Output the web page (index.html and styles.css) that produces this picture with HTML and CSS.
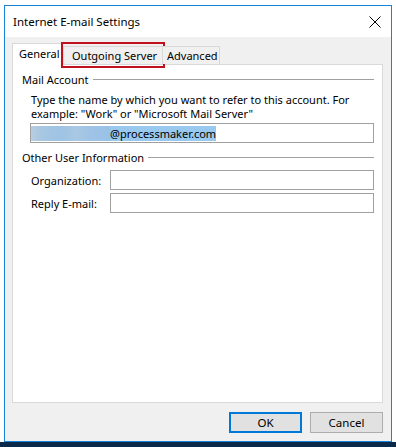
FILE: index.html
```html
<!DOCTYPE html>
<html lang="en">
<head>
    <meta charset="UTF-8">
    <title>Internet E-mail Settings</title>
    <link rel="stylesheet" href="styles.css">
</head>
<body>
    <div class="desktop">
        <div class="window">
            <div class="titlebar">
                <span class="title">Internet E-mail Settings</span>
                <span class="close">
                    <svg width="12" height="12" viewBox="0 0 12 12"><path d="M0.5 0.5 L11.5 11.5 M11.5 0.5 L0.5 11.5" stroke="#000" stroke-width="1"/></svg>
                </span>
            </div>
            <div class="content">
                <div class="tabs">
                    <div class="tab active">General</div>
                    <div class="tab marked">Outgoing Server</div>
                    <div class="tab last">Advanced</div>
                </div>
                <div class="panel">
                    <div class="group-title"><span>Mail Account</span></div>
                    <p class="hint">Type the name by which you want to refer to this account. For<br>example: "Work" or "Microsoft Mail Server"</p>
                    <div class="field wide"><span class="blur"></span><span class="sel">@processmaker.com</span></div>

                    <div class="group-title"><span>Other User Information</span></div>
                    <div class="row">
                        <label>Organization:</label>
                        <div class="field"></div>
                    </div>
                    <div class="row">
                        <label>Reply E-mail:</label>
                        <div class="field"></div>
                    </div>
                </div>
                <div class="buttons">
                    <button class="btn default">OK</button>
                    <button class="btn">Cancel</button>
                </div>
            </div>
        </div>
    </div>
    <div class="taskbar"></div>
</body>
</html>
```

FILE: styles.css
```css
body {
    margin: 0;
    width: 396px;
    height: 447px;
    overflow: hidden;
    background: #fff;
    font-family: "Noto Sans", "Liberation Sans", sans-serif;
    font-size: 11px;
    color: #000;
}
.desktop {
    padding: 5px 0 0 4px;
}
.window {
    width: 386px;
    height: 435px;
    border: 1px solid #1883d7;
    display: flex;
    flex-direction: column;
    background: #f0f0f0;
}
.titlebar {
    height: 31px;
    background: #fff;
    display: flex;
    align-items: center;
    justify-content: space-between;
    padding: 0 10px 0 8px;
}
.title {
    font-size: 11.5px;
}
.close {
    display: flex;
    margin-top: 1px;
}
.content {
    flex: 1;
    display: flex;
    flex-direction: column;
    padding: 6px 8px 8px 7px;
}
.tabs {
    display: flex;
    align-items: flex-end;
    height: 21px;
    position: relative;
    z-index: 1;
}
.tab {
    height: 18px;
    line-height: 17px;
    border: 1px solid #d9d9d9;
    border-bottom: none;
    background: #f0f0f0;
    box-sizing: border-box;
    position: relative;
    white-space: nowrap;
}
.tab.active {
    width: 51px;
    height: 22px;
    line-height: 20px;
    background: #fff;
    padding-left: 6px;
    margin-bottom: -1px;
}
.tab.marked {
    width: 100px;
    padding-left: 8px;
}
.tab.last {
    width: 58px;
    margin-left: -1px;
    padding-left: 4px;
}
.tab.marked::after {
    content: "";
    position: absolute;
    left: -3px;
    top: -5px;
    right: -3px;
    bottom: -4px;
    border: 2px solid #c0111f;
}
.panel {
    flex: 1;
    background: #fff;
    border: 1px solid #d9d9d9;
    padding: 6px 8px 0 9px;
}
.group-title {
    display: flex;
    align-items: center;
    height: 16px;
}
.group-title::after {
    content: "";
    flex: 1;
    height: 1px;
    background: #a0a0a0;
    margin-left: 4px;
}
.hint {
    margin: 6px 0 0 9px;
    line-height: 14px;
}
.field {
    height: 20px;
    border: 1px solid #a0a0a0;
    box-sizing: border-box;
    background: #fff;
    display: flex;
    align-items: center;
}
.field.wide {
    margin: 2px 0 6px 8px;
}
.blur {
    width: 79px;
    height: 15px;
    background: linear-gradient(90deg, #b9cde0 0, #a8c7e2 10px, #9ec3e4 30px, #a9c8e3 45px, #9fc3e6 60px, #99c2e8 79px);
}
.sel {
    background: #99c9ef;
    line-height: 15px;
    height: 15px;
}
.row {
    display: flex;
    align-items: center;
    margin: 5px 0 0 9px;
}
.row + .row {
    margin-top: 3px;
}
.row label {
    width: 79px;
}
.row .field {
    flex: 1;
}
.buttons {
    display: flex;
    justify-content: flex-end;
    gap: 8px;
    margin-top: 9px;
}
.btn {
    width: 73px;
    height: 21px;
    background: #e1e1e1;
    border: 1px solid #adadad;
    font-family: inherit;
    font-size: 11.5px;
    padding: 0;
}
.btn.default {
    border: 2px solid #0078d7;
}
.taskbar {
    height: 5px;
    background: #0b2a4a;
}
```
